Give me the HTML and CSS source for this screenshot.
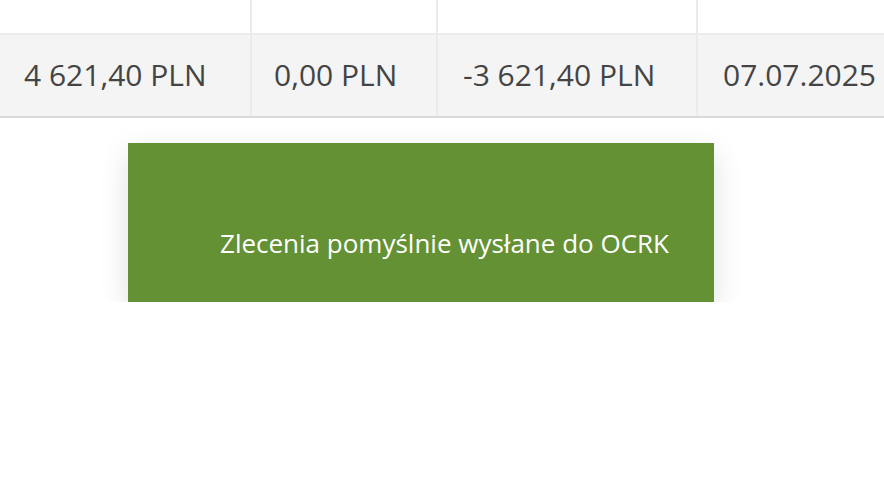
FILE: index.html
```html
<!DOCTYPE html>
<html lang="pl">
<head>
<meta charset="utf-8">
<link rel="stylesheet" href="styles.css">
</head>
<body>
<div class="table">
  <div class="row row-top">
    <div class="cell c1"></div>
    <div class="cell c2"></div>
    <div class="cell c3"></div>
    <div class="cell c4"></div>
  </div>
  <div class="row row-data">
    <div class="cell c1">4 621,40 PLN</div>
    <div class="cell c2">0,00 PLN</div>
    <div class="cell c3">-3 621,40 PLN</div>
    <div class="cell c4">07.07.2025</div>
  </div>
</div>
<div class="toast-area">
  <div class="toast">Zlecenia pomyślnie wysłane do OCRK</div>
</div>
</body>
</html>
```
FILE: styles.css
```css
html, body {
  margin: 0;
  padding: 0;
  background: #ffffff;
  font-family: "Open Sans", "Noto Sans", sans-serif;
  overflow: hidden;
}
.table {
  width: 884px;
  overflow: hidden;
}
.row {
  display: flex;
  white-space: nowrap;
}
.row-top {
  height: 33px;
  border-bottom: 2px solid #ebebeb;
}
.row-data {
  height: 81px;
  background: #f4f4f4;
  border-bottom: 2px solid #d9d9d9;
  align-items: center;
  font-size: 30px;
  color: #444444;
}
.cell {
  flex: none;
  box-sizing: border-box;
  height: 100%;
  display: flex;
  align-items: center;
  padding-bottom: 2px;
  border-right: 2px solid #ebebeb;
}
.c1 { width: 252px; padding-left: 24px; }
.c2 { width: 186px; padding-left: 22px; }
.c3 { width: 260px; padding-left: 25px; }
.c4 { width: 200px; padding-left: 25px; border-right: none; }
.toast-area {
  padding: 25px 0 0 128px;
}
.toast {
  box-sizing: border-box;
  width: 586px;
  height: 159px;
  background: #639134;
  color: #ffffff;
  font-size: 26px;
  padding: 84px 0 0 92px;
  line-height: 32px;
  box-shadow: 0 10px 28px rgba(0, 0, 0, 0.12);
}
```
